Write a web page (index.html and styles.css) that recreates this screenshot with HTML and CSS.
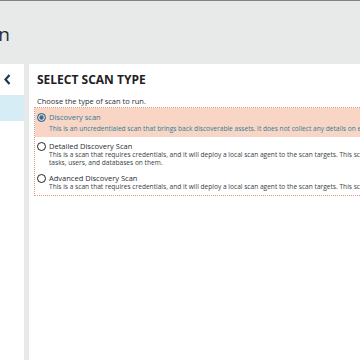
FILE: index.html
```html
<!DOCTYPE html>
<html lang="en">
<head>
    <meta charset="UTF-8">
    <meta name="viewport" content="width=device-width, initial-scale=1.0">
    <title>Run Scan</title>
    <link rel="stylesheet" href="styles.css">
</head>
<body>
    <header class="page-header">
        <div class="title-clip">
            <h1 class="page-title">Run Scan</h1>
        </div>
    </header>

    <div class="layout">
        <aside class="sidebar">
            <button class="collapse-btn" aria-label="Collapse">
                <svg width="7" height="11" viewBox="0 0 7 11">
                    <path d="M5.5 1 L1.5 5.5 L5.5 10" fill="none" stroke="#1d3654" stroke-width="2.2"/>
                </svg>
            </button>
            <div class="nav-item active"></div>
        </aside>

        <main class="content">
            <h2 class="section-title">SELECT SCAN TYPE</h2>
            <p class="hint">Choose the type of scan to run.</p>

            <div class="scan-options">
                <label class="scan-option selected">
                    <input type="radio" name="scan" checked>
                    <span class="radio"></span>
                    <span class="option-text">
                        <span class="option-name">Discovery scan</span>
                        <span class="option-desc">This is an uncredentialed scan that brings back discoverable assets. It does not collect any details on each asset.</span>
                    </span>
                </label>
                <label class="scan-option">
                    <input type="radio" name="scan">
                    <span class="radio"></span>
                    <span class="option-text">
                        <span class="option-name">Detailed Discovery Scan</span>
                        <span class="option-desc">This is a scan that requires credentials, and it will deploy a local scan agent to the scan targets. This scan discovers running processes, services, scheduled tasks, users, and databases on them.</span>
                    </span>
                </label>
                <label class="scan-option">
                    <input type="radio" name="scan">
                    <span class="radio"></span>
                    <span class="option-text">
                        <span class="option-name">Advanced Discovery Scan</span>
                        <span class="option-desc">This is a scan that requires credentials, and it will deploy a local scan agent to the scan targets. This scan collects full details.</span>
                    </span>
                </label>
            </div>
        </main>
    </div>
</body>
</html>
```

FILE: styles.css
```css
* {
    box-sizing: border-box;
}

html, body {
    height: 100%;
}

body {
    margin: 0;
    font-family: "Open Sans", Arial, sans-serif;
    color: #2b2e33;
    background-color: #e8e9e9;
    overflow: hidden;
    display: flex;
    flex-direction: column;
}

.page-header {
    height: 64px;
    border-top: 1px solid #7f8186;
    background-color: #e8e9e9;
    display: flex;
    align-items: center;
    padding-top: 2px;
}

.title-clip {
    width: 10px;
    overflow: hidden;
    display: flex;
    justify-content: flex-end;
}

.page-title {
    margin: 0;
    font-size: 19px;
    font-weight: 400;
    white-space: nowrap;
    color: #2a2d33;
}

.layout {
    flex: 1;
    display: flex;
    gap: 5px;
    min-height: 0;
}

.sidebar {
    width: 24px;
    background-color: #fff;
    padding-top: 10px;
}

.collapse-btn {
    display: block;
    border: none;
    background: none;
    padding: 0 0 0 4px;
    height: 11px;
    cursor: pointer;
}

.collapse-btn svg {
    display: block;
}

.nav-item {
    height: 26px;
    margin-top: 10px;
}

.nav-item.active {
    background-color: #d7edf5;
}

.content {
    flex: 1;
    min-width: 0;
    overflow: hidden;
    background-color: #fff;
    padding: 8px 0 0 5px;
}

.section-title {
    margin: 0 0 0 3px;
    font-size: 12px;
    font-weight: 700;
    line-height: 16px;
    color: #1f2226;
}

.hint {
    margin: 8px 0 1px 3px;
    font-size: 7.5px;
    line-height: 10px;
    color: #2b2e33;
}

.scan-options {
    border: 1px dotted #e39a78;
    border-right: none;
    width: 500px;
}

.scan-option {
    display: flex;
    align-items: flex-start;
    gap: 3px;
    padding: 4px 0 1px 2px;
    cursor: pointer;
}

.scan-option:last-child {
    padding-bottom: 4px;
}

.scan-option input {
    display: none;
}

.scan-option.selected {
    background-color: #f8d5c4;
    padding-bottom: 3px;
}

.radio {
    width: 9px;
    height: 9px;
    margin-top: 1px;
    border-radius: 50%;
    border: 1.4px solid #222;
    background-color: #fff;
    flex-shrink: 0;
}

.selected .radio {
    border: 1.4px solid #2b6f9c;
    background-color: #2b6f9c;
    box-shadow: inset 0 0 0 1.3px #f8d5c4;
}

.option-text {
    display: flex;
    flex-direction: column;
}

.option-name {
    font-size: 7.5px;
    line-height: 10px;
    color: #2b2e33;
}

.option-desc {
    font-size: 6.6px;
    line-height: 8.5px;
    color: #3a3d42;
    width: 472px;
}

.selected .option-name,
.selected .option-desc {
    color: #2f7f99;
}

.selected .option-desc {
    margin-top: 3px;
}
```
